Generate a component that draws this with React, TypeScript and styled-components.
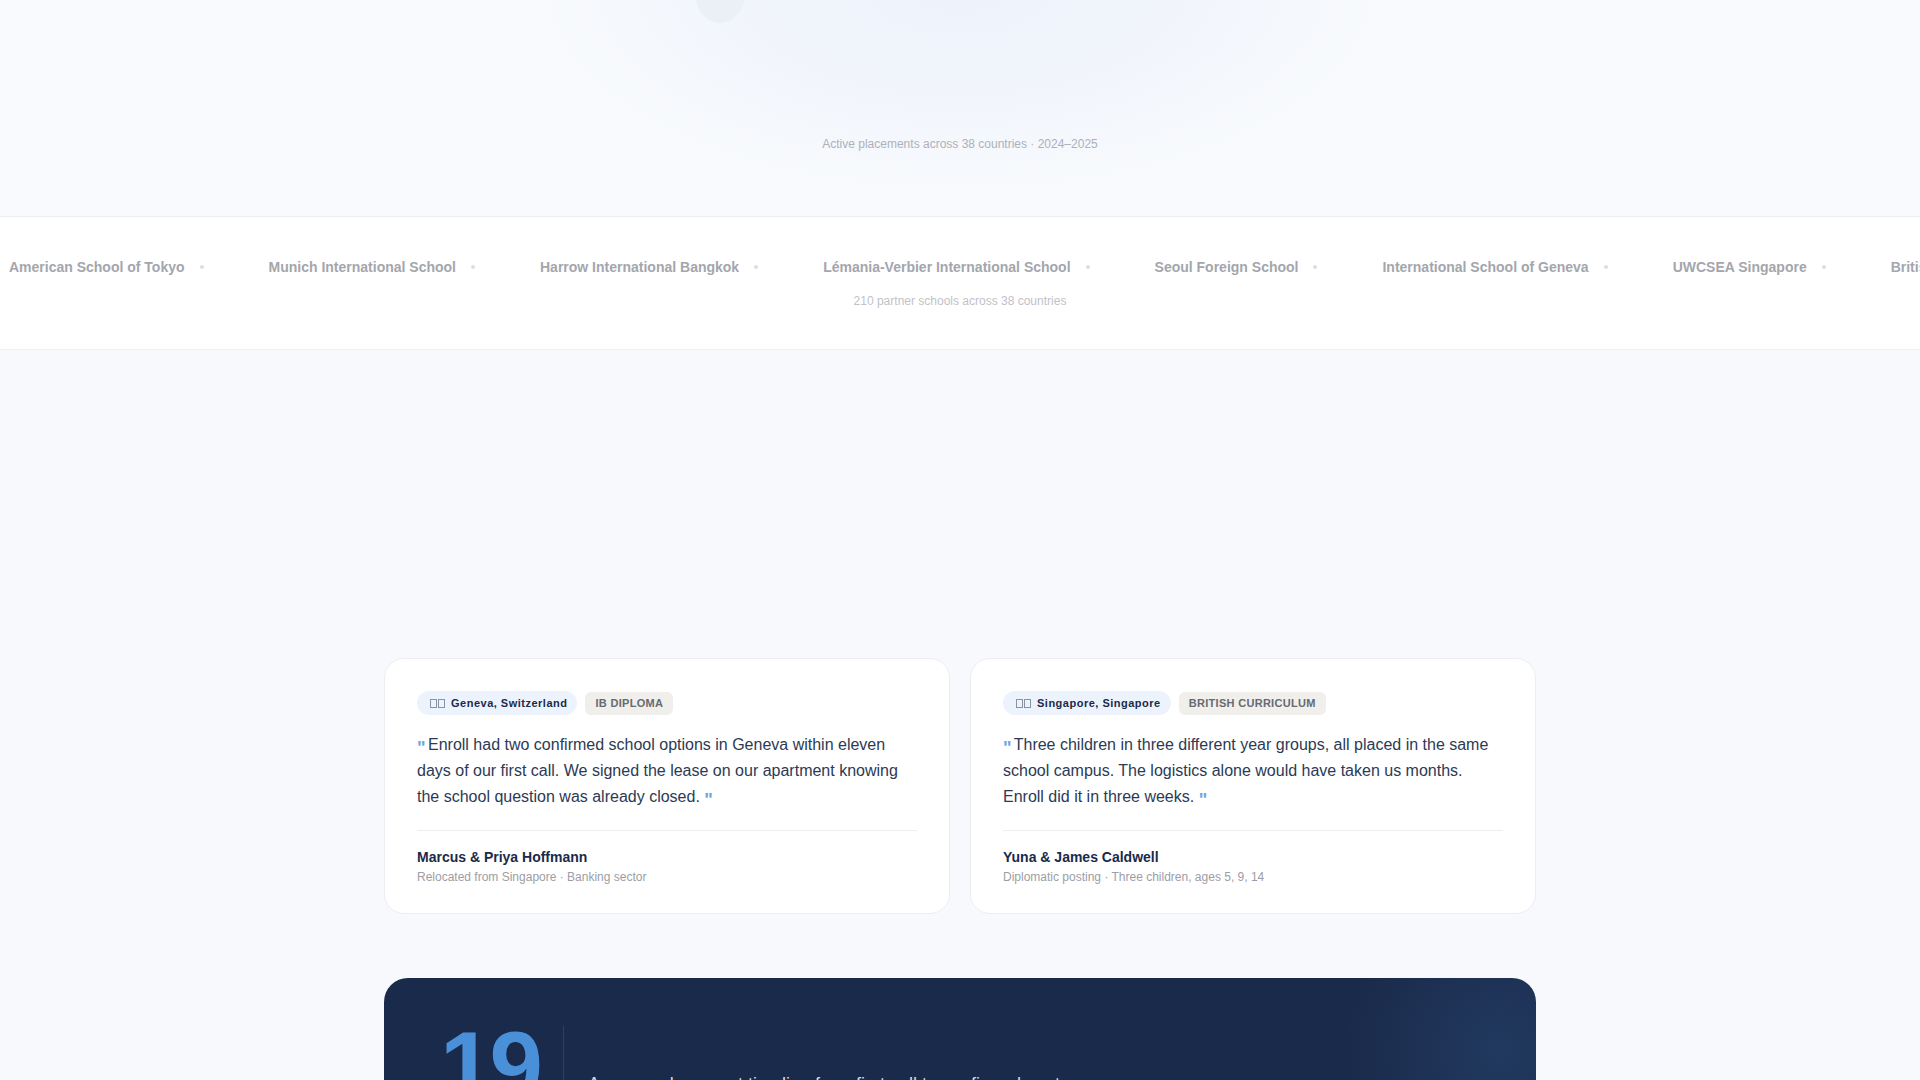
import React from 'react';
import styled, { createGlobalStyle } from 'styled-components';

const GlobalStyle = createGlobalStyle`
    html, body {
        margin: 0;
        padding: 0;
        background: #f8f9fc;
        font-family: "Liberation Sans", Arial, sans-serif;
        overflow-x: hidden;
    }
`;

const Page = styled.div`
    min-height: 100vh;
    background: #f8f9fc;
`;

const MapSection = styled.section`
    position: relative;
    height: 216px;
    overflow: hidden;
    display: flex;
    flex-direction: column;
    justify-content: flex-end;
    align-items: center;
    padding-bottom: 65px;
    box-sizing: border-box;
    background: #f8fafd;
`;

const MapGlow = styled.div`
    position: absolute;
    left: 520px;
    top: -230px;
    width: 880px;
    height: 430px;
    border-radius: 50%;
    background: radial-gradient(closest-side, #edf2fb 0%, rgba(240, 244, 251, 0.8) 50%, rgba(240, 244, 251, 0) 100%);
`;

const MapPin = styled.div`
    position: absolute;
    left: 695px;
    top: -37px;
    width: 50px;
    height: 60px;
    border-radius: 50%;
    background: #ebeff6;
`;

const MapCaption = styled.p`
    position: relative;
    margin: 0;
    font-size: 12px;
    line-height: 14px;
    color: #adb1ba;
`;

const SchoolStrip = styled.section`
    background: #fff;
    border-top: 1px solid #eceef2;
    border-bottom: 1px solid #eff0f3;
    height: 134px;
    box-sizing: border-box;
    padding-top: 41px;
    overflow: hidden;
`;

const SchoolRow = styled.div`
    display: flex;
    align-items: center;
    height: 18px;
    padding-left: 9px;
    white-space: nowrap;
`;

const SchoolItem = styled.div`
    display: flex;
    align-items: center;
    flex-shrink: 0;
    margin-right: 65px;
    font-size: 14px;
    font-weight: 700;
    color: #a3a6ad;
`;

const SchoolDot = styled.span`
    width: 4px;
    height: 4px;
    margin-left: 15px;
    border-radius: 50%;
    background: #d8dfe8;
`;

const StripNote = styled.p`
    margin: 18px 0 0;
    text-align: center;
    font-size: 12px;
    line-height: 14px;
    color: #bfc2c8;
`;

const Content = styled.main`
    width: 1152px;
    margin: 0 auto;
    padding-top: 308px;
`;

const CardGrid = styled.div`
    display: grid;
    grid-template-columns: 1fr 1fr;
    gap: 20px;
`;

const Card = styled.article`
    background: #fff;
    border: 1px solid #eceef3;
    border-radius: 20px;
    padding: 32px;
    height: 256px;
    box-sizing: border-box;
`;

const TagRow = styled.div`
    display: flex;
    align-items: center;
    gap: 8px;
    margin-bottom: 17px;
`;

const PlaceTag = styled.span`
    display: inline-flex;
    align-items: center;
    gap: 6px;
    height: 24px;
    padding: 0 10px;
    border-radius: 12px;
    background: #edf3fc;
    font-size: 11px;
    font-weight: 700;
    letter-spacing: 0.5px;
    color: #1a2a4a;
`;

// the missing-glyph boxes the flag emoji falls back to in the reference
const Flag = styled.span`
    display: inline-flex;
    justify-content: flex-end;
    gap: 1px;
    width: 18px;
`;

const FlagBox = styled.span`
    width: 7px;
    height: 9px;
    box-sizing: border-box;
    border: 1px solid #8a93a5;
`;

const CurriculumTag = styled.span`
    display: inline-flex;
    align-items: center;
    height: 23px;
    padding: 0 10px;
    border-radius: 6px;
    background: #f1efeb;
    font-size: 11px;
    font-weight: 700;
    letter-spacing: 0.3px;
    color: #666a72;
`;

const Quote = styled.p`
    margin: 0;
    font-size: 16px;
    line-height: 26px;
    color: #2c3a55;
`;

const QuoteMark = styled.span`
    font-size: 18px;
    line-height: 0;
    font-weight: 700;
    vertical-align: -4px;
    margin-right: -2px;
    color: #6fa6e0;
`;

const Divider = styled.hr`
    border: none;
    border-top: 1px solid #eceef2;
    margin: 20px 0 18px;
`;

const Author = styled.div`
    font-size: 14px;
    line-height: 17px;
    font-weight: 700;
    color: #1a2a4a;
`;

const AuthorNote = styled.div`
    margin-top: 4px;
    font-size: 12px;
    line-height: 14px;
    color: #9b9ea5;
`;

const StatBanner = styled.section`
    position: relative;
    margin-top: 64px;
    border-radius: 24px;
    background: #1a2a4a;
    padding: 40px 56px;
    display: flex;
    align-items: flex-start;
    gap: 24px;
    overflow: hidden;
    height: 220px;
    box-sizing: border-box;
`;

const BannerGlow = styled.div`
    position: absolute;
    right: -124px;
    top: -88px;
    width: 320px;
    height: 320px;
    border-radius: 50%;
    background: radial-gradient(circle, rgba(74, 144, 217, 0.15) 0%, rgba(74, 144, 217, 0) 70%);
`;

const StatNumber = styled.div`
    font-size: 96px;
    line-height: 1;
    font-weight: 700;
    letter-spacing: -3.84px;
    color: #4a90d9;
`;

const StatRule = styled.div`
    width: 1px;
    height: 120px;
    margin-top: 8px;
    background: rgba(255, 255, 255, 0.1);
`;

const StatText = styled.p`
    margin: 52px 0 0;
    font-size: 18px;
    line-height: 28px;
    color: #d5dae4;
`;

const schools = [
    'American School of Tokyo',
    'Munich International School',
    'Harrow International Bangkok',
    'Lémania-Verbier International School',
    'Seoul Foreign School',
    'International School of Geneva',
    'UWCSEA Singapore',
    'British School of Brussels',
];

const testimonials = [
    {
        place: 'Geneva, Switzerland',
        curriculum: 'IB DIPLOMA',
        quote: 'Enroll had two confirmed school options in Geneva within eleven days of our first call. We signed the lease on our apartment knowing the school question was already closed.',
        author: 'Marcus & Priya Hoffmann',
        note: 'Relocated from Singapore · Banking sector',
    },
    {
        place: 'Singapore, Singapore',
        curriculum: 'BRITISH CURRICULUM',
        quote: 'Three children in three different year groups, all placed in the same school campus. The logistics alone would have taken us months. Enroll did it in three weeks.',
        author: 'Yuna & James Caldwell',
        note: 'Diplomatic posting · Three children, ages 5, 9, 14',
    },
];

const App: React.FC = () => {
    return (
        <>
            <GlobalStyle />
            <Page>
                <MapSection>
                    <MapGlow />
                    <MapPin />
                    <MapCaption>Active placements across 38 countries · 2024–2025</MapCaption>
                </MapSection>
                <SchoolStrip>
                    <SchoolRow>
                        {schools.map((school) => (
                            <SchoolItem key={school}>
                                {school}
                                <SchoolDot />
                            </SchoolItem>
                        ))}
                    </SchoolRow>
                    <StripNote>210 partner schools across 38 countries</StripNote>
                </SchoolStrip>
                <Content>
                    <CardGrid>
                        {testimonials.map((t) => (
                            <Card key={t.author}>
                                <TagRow>
                                    <PlaceTag>
                                        <Flag>
                                            <FlagBox />
                                            <FlagBox />
                                        </Flag>
                                        {t.place}
                                    </PlaceTag>
                                    <CurriculumTag>{t.curriculum}</CurriculumTag>
                                </TagRow>
                                <Quote>
                                    <QuoteMark>"</QuoteMark> {t.quote} <QuoteMark>"</QuoteMark>
                                </Quote>
                                <Divider />
                                <Author>{t.author}</Author>
                                <AuthorNote>{t.note}</AuthorNote>
                            </Card>
                        ))}
                    </CardGrid>
                    <StatBanner>
                        <BannerGlow />
                        <StatNumber>19</StatNumber>
                        <StatRule />
                        <StatText>Average placement timeline from first call to confirmed seat</StatText>
                    </StatBanner>
                </Content>
            </Page>
        </>
    );
};

export default App;
